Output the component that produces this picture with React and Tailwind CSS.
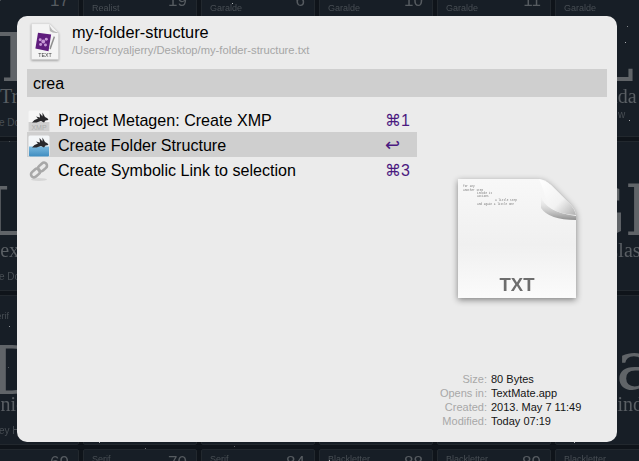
import React from 'react';

const sans = "font-['Liberation_Sans',Arial,sans-serif]";

// typeface table behind the panel, only the strips around the panel show
const rows = [
    [
        { a: 'Serif', b: 'Serif', n: '17', glyph: 'T', gx: 'pl-[25px]', name: 'Tri', nx: 'pl-[34px]', c: 'e Do', cx: 'pl-[33px]' },
        { a: 'Serif', b: 'Realist', n: '19' },
        { a: 'Serif', b: 'Garalde', n: '6' },
        { a: 'Serif', b: 'Garalde', n: '10' },
        { a: 'Serif', b: 'Garalde', n: '11' },
        { a: 'Serif', b: 'Garalde', n: '12', glyph: 'L', gx: 'pl-[33px]', name: 'Linda', nx: 'pl-[34px]', c: 'w', cx: 'pl-[62px] relative top-[-8px]' },
    ],
    [
        { a: 'Serif', b: 'Serif', n: '33', glyph: 'L', gx: 'pl-[18px]', name: 'Lex', nx: 'pl-[22px]', c: 'e Do', cx: 'pl-[33px]' },
        { a: 'Serif', b: 'Garalde', n: '34' },
        { a: 'Serif', b: 'Garalde', n: '35' },
        { a: 'Serif', b: 'Garalde', n: '36' },
        { a: 'Serif', b: 'Garalde', n: '37' },
        { a: 'Serif', b: 'Garalde', n: '38', glyph: 'Gl', gx: 'pl-[16px]', name: 'Class', nx: 'pl-[49px]' },
    ],
    [
        { a: 'Serif', b: 'Old Serif', n: '51', glyph: 'D', gx: 'pl-[23px] translate-y-[5px]', name: 'Unic', nx: 'pl-[20px]', c: 'ey H', cx: 'pl-[33px]' },
        { a: 'Serif', b: 'Serif', n: '52' },
        { a: 'Serif', b: 'Serif', n: '53' },
        { a: 'Serif', b: 'Serif', n: '54' },
        { a: 'Serif', b: 'Serif', n: '55' },
        { a: 'Serif', b: 'Serif', n: '56', glyph: 'a', gx: 'pl-[60px]', name: 'Kind', nx: 'pl-[47px]' },
    ],
    [
        { a: 'Serif', n: '69' },
        { a: 'Serif', n: '70' },
        { a: 'Serif', n: '84' },
        { a: 'Blackletter', n: '88' },
        { a: 'Blackletter', n: '89' },
        { a: 'Blackletter', n: '90' },
    ],
];

// fixed dust of small white specks
const specks = Array.from({ length: 120 }, (_, i) => ({
    x: (i * 197 + (i * i) % 83) % 639,
    y: (i * 131 + (i * i) % 61) % 461,
    o: 0.2 + ((i * 7) % 10) / 16,
}));

const TableCell = ({ cell }) => (
    <div className="relative h-[150px] w-[114px] shrink-0 overflow-hidden rounded-[2px] border border-[#22282e] bg-[#171e26] text-[#484e54]">
        <div className={`${sans} pl-2 pt-[4px] text-[9px] leading-[11px]`}>
            <p>{cell.a}</p>
            <p>{cell.b || '\u00a0'}</p>
        </div>
        <span className={`${sans} absolute right-[9px] top-[3px] text-[17px] leading-[20px] text-[#565b60]`}>{cell.n}</span>
        {cell.glyph && (
            <p className={`font-['DejaVu_Serif',serif] mt-[10px] h-[62px] whitespace-nowrap text-[68px] leading-[68px] text-[#606468] ${cell.gx}`}>
                {cell.glyph}
            </p>
        )}
        {cell.name && (
            <p className={`font-['Liberation_Serif',serif] whitespace-nowrap text-[20px] leading-[20px] text-[#5a5f64] ${cell.nx}`}>
                {cell.name}
            </p>
        )}
        {cell.c && <p className={`${sans} mt-[11px] whitespace-nowrap text-[10px] leading-[11px] ${cell.cx}`}>{cell.c}</p>}
    </div>
);

const TextIcon = () => (
    <svg width="28" height="37" viewBox="0 0 32 42" className="drop-shadow-[0_1px_1px_rgba(0,0,0,0.35)]">
        <path d="M0.5 0.5H21L31.5 11V41.5H0.5Z" fill="#f4f4f4" stroke="#cfcfcf" strokeWidth="0.5" />
        <path d="M21 0.5Q22 9 31.5 11Q25 12 21.5 9Z" fill="#b8b8b8" />
        <path d="M8 11L23 13L20 32L5 29Z" fill="#5f1c7d" />
        <g fill="#c79ad6">
            <circle cx="14" cy="21" r="2.2" />
            <circle cx="10.5" cy="19" r="1.7" />
            <circle cx="17.5" cy="18.5" r="1.7" />
            <circle cx="11" cy="24.5" r="1.7" />
            <circle cx="16.5" cy="25" r="1.7" />
        </g>
        <path d="M21 29L26 15L27.5 15.8L22.5 30Z" fill="#8f8f8f" />
        <text x="16" y="38.5" textAnchor="middle" fontSize="6" fill="#3f3f3f" fontFamily="Liberation Sans">TEXT</text>
    </svg>
);

const Rabbit = () => (
    <path d="M4 12.5Q6 9.5 10 8.5L8 6.5L12 7.5L11.5 3L14.5 6.5L14.5 2.5L17 7Q20 8 20.5 10L17.5 10.5L16 12.5L13 11L8.5 12.5Z" fill="#29292c" />
);

const XmpIcon = () => (
    <svg width="22" height="22" viewBox="0 0 22 22">
        <rect x="0.5" y="0.5" width="21" height="21" rx="1.5" fill="#f6f6f6" />
        <rect x="0.5" y="12" width="21" height="9.5" fill="#cfcfcf" />
        <Rabbit />
        <text x="11" y="19.5" textAnchor="middle" fontSize="7" fill="#adadad" fontFamily="Liberation Sans">XMP</text>
    </svg>
);

const FolderIcon = () => (
    <svg width="22" height="22" viewBox="0 0 22 22">
        <defs>
            <linearGradient id="folder" x1="0" y1="0" x2="0" y2="1">
                <stop offset="0" stopColor="#7ab9df" />
                <stop offset="1" stopColor="#3f8dc0" />
            </linearGradient>
        </defs>
        <rect x="0.5" y="0.5" width="21" height="21" rx="1.5" fill="#f3f6f8" />
        <path d="M1 11.5H21V20.5Q21 21.5 20 21.5H2Q1 21.5 1 20.5Z" fill="url(#folder)" />
        <Rabbit />
    </svg>
);

const LinkIcon = () => (
    <svg width="22" height="22" viewBox="0 0 22 22">
        <ellipse cx="11" cy="19.5" rx="8" ry="1.5" fill="#d6d6d6" />
        <g fill="none" stroke="#a8a8a8" strokeWidth="2.6">
            <rect x="2.5" y="10" width="10" height="6" rx="3" transform="rotate(-42 7.5 13)" />
            <rect x="9.5" y="4" width="10" height="6" rx="3" transform="rotate(-42 14.5 7)" />
        </g>
    </svg>
);

const Shortcut = ({ children, big }) => (
    <span className={`font-['Liberation_Sans','DejaVu_Sans',sans-serif] absolute left-[358px] text-[#4b1a80] ${big ? 'text-[18px]' : 'text-[16px]'}`}>
        {children}
    </span>
);

const actions = [
    { title: 'Project Metagen: Create XMP', icon: <XmpIcon />, key: '⌘1' },
    { title: 'Create Folder Structure', icon: <FolderIcon />, key: '↩', selected: true },
    { title: 'Create Symbolic Link to selection', icon: <LinkIcon />, key: '⌘3' },
];

const BigDocument = () => (
    <svg width="120" height="122" viewBox="0 0 120 122" className="drop-shadow-[0_2px_3px_rgba(0,0,0,0.45)]">
        <defs>
            <linearGradient id="page" x1="0" y1="0" x2="0" y2="1">
                <stop offset="0" stopColor="#f8f8f8" />
                <stop offset="0.55" stopColor="#f0f0f0" />
                <stop offset="1" stopColor="#fbfbfb" />
            </linearGradient>
            <linearGradient id="curl" x1="0" y1="0" x2="1" y2="1">
                <stop offset="0" stopColor="#ffffff" />
                <stop offset="0.6" stopColor="#f2f2f2" />
                <stop offset="1" stopColor="#b0b0b0" />
            </linearGradient>
            <linearGradient id="fold" x1="0" y1="0" x2="0" y2="1">
                <stop offset="0" stopColor="#e8e8e8" stopOpacity="0" />
                <stop offset="1" stopColor="#8e8e8e" />
            </linearGradient>
        </defs>
        <path d="M1 1H82Q88 1 94 7L113 26Q119 32 119 38V120H1Z" fill="url(#page)" />
        <path d="M84 18Q88 34 119 38V42Q92 42 84 30Z" fill="url(#fold)" />
        <path d="M82 1Q86 2 94 7L113 26Q117 30 119 37Q95 36 90 24Q87 12 82 1Z" fill="url(#curl)" />
        <g fontSize="2.8" fill="#777" fontFamily="Liberation Mono">
            <text x="6" y="9">for any</text>
            <text x="6" y="12.5">another step</text>
            <text x="20" y="16">invoke it</text>
            <text x="20" y="19">actions</text>
            <text x="38" y="23">a little step</text>
            <text x="20" y="26.5">and again a little one</text>
        </g>
        <text x="60" y="113" textAnchor="middle" fontSize="18.5" fontWeight="700" fill="#6d6d6d" fontFamily="Liberation Sans">TXT</text>
    </svg>
);

const meta = [
    ['Size:', '80 Bytes'],
    ['Opens in:', 'TextMate.app'],
    ['Created:', '2013. May 7 11:49'],
    ['Modified:', 'Today 07:19'],
];

const App = () => {
    return (
        <div className={`${sans} relative h-[461px] w-[639px] overflow-hidden bg-[#0f141a]`}>
            {/* Background table */}
            <div className="ml-[-35px] mt-[-13px] flex flex-col gap-[4px] blur-[0.4px]">
                {rows.map((row, r) => (
                    <div key={r} className="flex gap-[4px]">
                        {row.map((cell, c) => <TableCell key={c} cell={cell} />)}
                    </div>
                ))}
            </div>
            <svg className="absolute inset-0" width="639" height="461">
                {specks.map((s, i) => <rect key={i} x={s.x} y={s.y} width="1" height="1" fill="#fff" opacity={s.o} />)}
            </svg>

            {/* Launcher panel */}
            <div className="absolute left-[17px] top-[16px] flex h-[426px] w-[600px] flex-col rounded-[10px] bg-[#ebebeb] px-[10px] text-black">
                <div className="flex h-[53px] shrink-0">
                    <div className="ml-[4px] mt-[7px] w-[28px]"><TextIcon /></div>
                    <div className="ml-[13px] mt-[6px]">
                        <p className="text-[16.3px] leading-[20px]">my-folder-structure</p>
                        <p className="mt-[1px] text-[11.2px] leading-[14px] text-[#a6a6a6]">/Users/royaljerry/Desktop/my-folder-structure.txt</p>
                    </div>
                </div>

                <div className="flex h-[28px] shrink-0 items-center bg-[#cfcfcf] pl-[6px] pt-[1px] text-[16px]">crea</div>

                <div className="mt-[10px] flex min-h-0 flex-1">
                    <ul className="w-[390px] shrink-0">
                        {actions.map((a) => (
                            <li key={a.title} className={`relative flex h-[25px] items-center pt-[2px] text-[16.1px] ${a.selected ? 'bg-[#cfcfcf]' : ''}`}>
                                <span className="ml-[1px] w-[22px]">{a.icon}</span>
                                <span className="ml-[8px]">{a.title}</span>
                                <Shortcut big={a.selected}>{a.key}</Shortcut>
                            </li>
                        ))}
                    </ul>
                    <div className="flex flex-1 flex-col pb-[14px]">
                        <div className="ml-[40px] mt-[71px]"><BigDocument /></div>
                        <dl className="mt-auto text-[11px] leading-[14px]">
                            {meta.map(([label, value]) => (
                                <div key={label} className="flex">
                                    <dt className="w-[70px] text-right text-[#a8a8a8]">{label}</dt>
                                    <dd className="ml-[4px] text-[#151515]">{value}</dd>
                                </div>
                            ))}
                        </dl>
                    </div>
                </div>
            </div>
        </div>
    );
};

export default App;
